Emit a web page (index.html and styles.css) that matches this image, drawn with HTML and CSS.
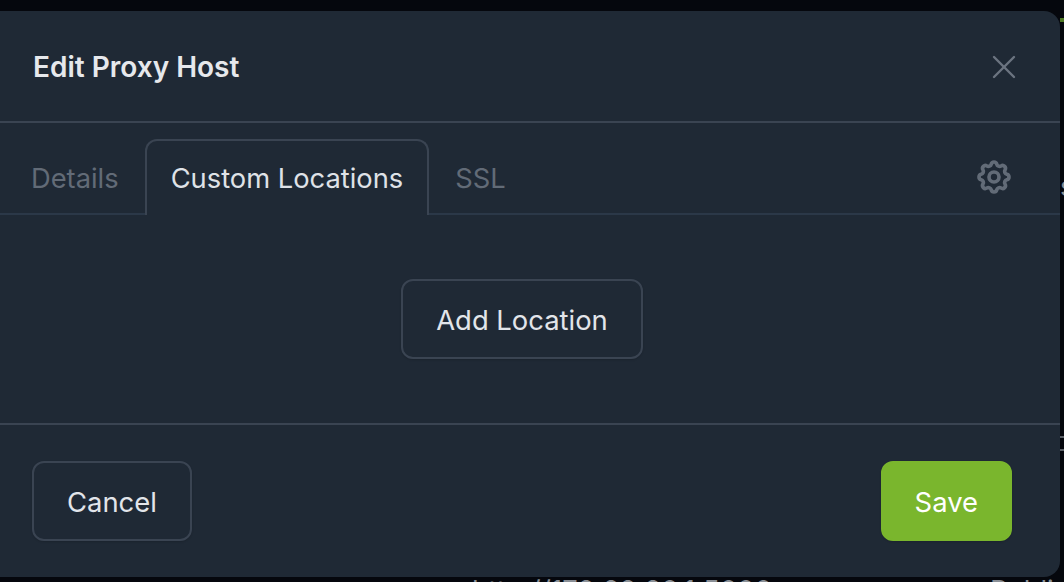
FILE: index.html
```html
<!DOCTYPE html>
<html lang="en">
<head>
    <meta charset="UTF-8">
    <meta name="viewport" content="width=device-width, initial-scale=1.0">
    <title>Edit Proxy Host</title>
    <link rel="stylesheet" href="styles.css">
</head>
<body>

    <!-- Page behind the dialog, only its edges show -->
    <div class="backdrop">
        <div class="backdrop-green"></div>
        <div class="backdrop-mark"></div>
        <span class="backdrop-text backdrop-s">s</span>
        <span class="backdrop-text backdrop-url">http://172.22.20.1:5000</span>
        <span class="backdrop-text backdrop-public">Public</span>
    </div>

    <!-- Dialog -->
    <div class="modal">
        <div class="modal-header">
            <h1 class="modal-title">Edit Proxy Host</h1>
            <button class="close-btn" aria-label="Close">
                <svg width="24" height="24" viewBox="0 0 24 24" fill="none" stroke="currentColor" stroke-width="2.4" stroke-linecap="round">
                    <path d="M2 2L22 22"/>
                    <path d="M22 2L2 22"/>
                </svg>
            </button>
        </div>

        <div class="tabs">
            <a class="tab">Details</a>
            <a class="tab active">Custom Locations</a>
            <a class="tab">SSL</a>
            <a class="tab-icon">
                <svg width="40" height="40" viewBox="0 0 24 24" fill="none" stroke="currentColor" stroke-width="2.2" stroke-linecap="round" stroke-linejoin="round">
                    <path d="M10.325 4.317c.426 -1.756 2.924 -1.756 3.35 0a1.724 1.724 0 0 0 2.573 1.066c1.543 -.94 3.31 .826 2.37 2.37a1.724 1.724 0 0 0 1.065 2.572c1.756 .426 1.756 2.924 0 3.35a1.724 1.724 0 0 0 -1.066 2.573c.94 1.543 -.826 3.31 -2.37 2.37a1.724 1.724 0 0 0 -2.572 1.065c-.426 1.756 -2.924 1.756 -3.35 0a1.724 1.724 0 0 0 -2.573 -1.066c-1.543 .94 -3.31 -.826 -2.37 -2.37a1.724 1.724 0 0 0 -1.065 -2.572c-1.756 -.426 -1.756 -2.924 0 -3.35a1.724 1.724 0 0 0 1.066 -2.573c-.94 -1.543 .826 -3.31 2.37 -2.37c1 .608 2.296 .07 2.572 -1.065z"/>
                    <circle cx="12" cy="12" r="3"/>
                </svg>
            </a>
        </div>

        <div class="modal-body">
            <button class="btn">Add Location</button>
        </div>

        <div class="modal-footer">
            <button class="btn btn-cancel">Cancel</button>
            <button class="btn btn-save">Save</button>
        </div>
    </div>

</body>
</html>
```

FILE: styles.css
```css
* {
    box-sizing: border-box;
}

html, body {
    height: 100%;
}

body {
    margin: 0;
    padding-top: 11px;
    background-color: #05070d;
    font-family: Inter, "Liberation Sans", sans-serif;
    overflow: hidden;
}

/* Page behind the dialog */
.backdrop-green {
    position: absolute;
    top: 18px;
    right: 0;
    width: 4px;
    height: 4px;
    background-color: #4f7a24;
}

.backdrop-mark {
    position: absolute;
    top: 436px;
    right: 0;
    width: 4px;
    height: 15px;
    border-top: 2px solid #5a5f66;
    border-bottom: 2px solid #5a5f66;
}

.backdrop-text {
    position: absolute;
    font-size: 27.4px;
    line-height: 32px;
    color: #8a8f96;
    white-space: nowrap;
}

.backdrop-s {
    top: 170px;
    left: 1060px;
}

.backdrop-url {
    top: 574px;
    left: 472px;
    letter-spacing: 0.15px;
}

.backdrop-public {
    top: 574px;
    left: 990px;
}

/* Dialog */
.modal {
    position: relative;
    width: 1076px;
    height: 566px;
    margin-left: -16px;
    background-color: #1f2935;
    border-radius: 16px;
    display: flex;
    flex-direction: column;
}

.modal-header {
    height: 112px;
    padding: 2px 44px 0 49px;
    border-bottom: 2px solid #3a4452;
    display: flex;
    align-items: center;
    justify-content: space-between;
}

.modal-title {
    margin: 0;
    font-size: 28px;
    font-weight: 600;
    color: #e6e8ec;
}

.close-btn {
    padding: 0;
    border: none;
    background: none;
    color: #6b7480;
    display: flex;
}

/* Tabs */
.tabs {
    height: 92px;
    padding: 16px 46px 0 21px;
    border-bottom: 2px solid #2b3848;
    display: flex;
}

.tab {
    height: 76px;
    margin-bottom: -2px;
    padding: 0 24px;
    border: 2px solid transparent;
    border-bottom: none;
    border-radius: 12px 12px 0 0;
    font-size: 27.3px;
    line-height: 75px;
    color: #626b77;
}

.tab.active {
    border-color: #3a4452;
    background-color: #1f2935;
    color: #dfe2e7;
}

.tab-icon {
    margin-left: auto;
    padding-top: 2px;
    align-self: center;
    display: flex;
    color: #626b77;
}

/* Body */
.modal-body {
    flex: 1;
    padding-bottom: 1px;
    border-bottom: 2px solid #3a4452;
    display: flex;
    align-items: center;
    justify-content: center;
}

.btn {
    height: 80px;
    padding: 2px 33px 0;
    border: 2px solid #3a4452;
    border-radius: 12px;
    background-color: transparent;
    box-shadow: 0 1px 2px rgba(0, 0, 0, 0.15);
    font-family: inherit;
    font-size: 27.4px;
    font-weight: 400;
    color: #e2e5ea;
}

/* Footer */
.modal-footer {
    height: 152px;
    padding: 36px 48px 0 48px;
    display: flex;
    align-items: flex-start;
    justify-content: space-between;
}

.btn-save {
    padding: 2px 32px 0;
    border-color: #7ab62d;
    background-color: #7ab62d;
    color: #ffffff;
}
```
